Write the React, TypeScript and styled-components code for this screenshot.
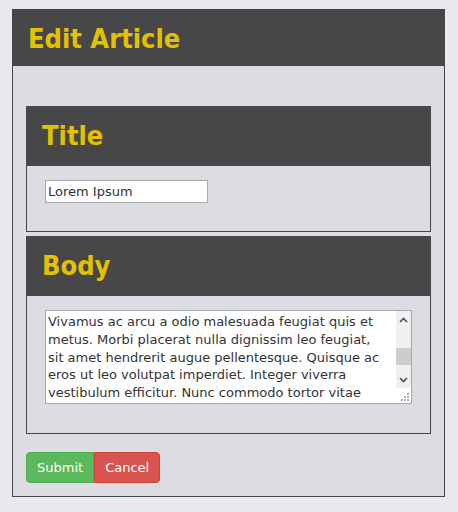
import React, { useLayoutEffect, useRef } from 'react';
import styled, { createGlobalStyle } from 'styled-components';

const GlobalStyle = createGlobalStyle`
  html, body {
    margin: 0;
    padding: 0;
    background: #e8e9ee;
    font-family: "DejaVu Sans", Verdana, sans-serif;
  }
`

const Page = styled.div`
  padding: 9px 13px 15px 12px;
`

const Panel = styled.form`
  background: #dcdde2;
  border: 1px solid #464646;
  display: flex;
  flex-direction: column;
`

const Header = styled.div<{ $height: number }>`
  box-sizing: border-box;
  height: ${(p) => p.$height}px;
  background: #474747;
  padding: 14px 16px 0;
  h1, h2 {
    margin: 0;
    color: #e3c100;
    font-family: "DejaVu Sans Condensed", "DejaVu Sans", Verdana, sans-serif;
    font-size: 27px;
    font-weight: bold;
    line-height: 31px;
  }
`

const PanelHeader = styled(Header)`
  margin: -1px -1px 0;
`

const PanelBody = styled.div`
  padding: 40px 13px 13px;
  display: flex;
  flex-direction: column;
  gap: 4px;
`

const Section = styled.fieldset`
  margin: 0;
  padding: 0;
  border: 1px solid #464646;
  border-top: none;
  min-width: 0;
`

const SectionHeader = styled(Header)`
  margin: 0 -1px;
`

const SectionContent = styled.div<{ $bottom: number }>`
  padding: 14px 18px ${(p) => p.$bottom}px;
`

const TextInput = styled.input`
  box-sizing: border-box;
  display: block;
  width: 163px;
  height: 23px;
  padding: 1px 2px;
  border: 1px solid #a9a9ac;
  background: #fff;
  color: #333;
  font: 13px "DejaVu Sans", Verdana, sans-serif;
  outline: none;
`

const TextBox = styled.div`
  box-sizing: border-box;
  display: flex;
  width: 367px;
  height: 94px;
  border: 1px solid #a9a9ac;
  background: #fff;
`

const TextArea = styled.textarea`
  flex: 1;
  min-width: 0;
  box-sizing: border-box;
  height: 100%;
  margin: 0;
  padding: 2px 13px 2px 2px;
  border: none;
  background: #fff;
  color: #333;
  font: 13px "DejaVu Sans", Verdana, sans-serif;
  line-height: 17.7px;
  overflow: hidden;
  resize: none;
  outline: none;
`

const ScrollBar = styled.div`
  width: 15px;
  display: flex;
  flex-direction: column;
`

const ScrollButton = styled.div`
  height: 17px;
  background: #f0f0f0;
  display: flex;
  align-items: center;
  justify-content: center;
`

const ScrollTrack = styled.div`
  flex: 1;
  background: #f0f0f0;
`

const ScrollThumb = styled.div`
  height: 17px;
  background: #cdcdcd;
`

const ScrollCorner = styled.div`
  height: 15px;
  background: #fff;
  display: flex;
  align-items: flex-end;
  justify-content: flex-end;
  padding: 0 2px 2px 0;
  box-sizing: border-box;
`

const Actions = styled.div`
  display: flex;
  margin-top: 14px;
`

const Button = styled.button<{ $variant: 'submit' | 'cancel' }>`
  height: 31px;
  padding: 0 10px;
  font: 13px "DejaVu Sans", Verdana, sans-serif;
  color: #fff;
  cursor: pointer;
  background: ${(p) => (p.$variant === 'submit' ? '#5cb85c' : '#d9534f')};
  border: 1px solid ${(p) => (p.$variant === 'submit' ? '#4cae4c' : '#d43f3a')};
  border-radius: ${(p) => (p.$variant === 'submit' ? '4px 0 0 4px' : '0 4px 4px 0')};
`

const intro =
  'Lorem ipsum dolor sit amet, consectetur adipiscing elit. Sed posuere interdum sem. Quisque ligula eros ullamcorper quis, lacinia quis facilisis sed sapien. Mauris varius diam vitae arcu. Sed arcu lectus auctor vitae, consectetuer et venenatis.\n\n'

const rest =
  'Vivamus ac arcu a odio malesuada feugiat quis et metus. Morbi placerat nulla dignissim leo feugiat, sit amet hendrerit augue pellentesque. Quisque ac eros ut leo volutpat imperdiet. Integer viverra vestibulum efficitur. Nunc commodo tortor vitae lectus ornare, et elementum massa faucibus. Praesent at ultrices augue, sed facilisis lectus.'

const Chevron = ({ up }: { up?: boolean }) => (
  <svg width='9' height='6' viewBox='0 0 9 6'>
    <path d={up ? 'M1 5l3.5-3.5L8 5' : 'M1 1l3.5 3.5L8 1'} fill='none' stroke='#505050' strokeWidth='1.7' />
  </svg>
)

const Grip = () => (
  <svg width='8' height='8' viewBox='0 0 8 8' fill='#b4b4b4'>
    <rect x='6' y='0' width='2' height='2' />
    <rect x='3' y='3' width='2' height='2' />
    <rect x='6' y='3' width='2' height='2' />
    <rect x='0' y='6' width='2' height='2' />
    <rect x='3' y='6' width='2' height='2' />
    <rect x='6' y='6' width='2' height='2' />
  </svg>
)

function App() {
  const bodyRef = useRef<HTMLTextAreaElement>(null)

  // keep the textarea scrolled so the "Vivamus" paragraph is at the top
  useLayoutEffect(() => {
    const el = bodyRef.current
    if (!el) return
    el.value = rest
    const restHeight = el.scrollHeight
    el.value = intro + rest
    el.scrollTop = el.scrollHeight - restHeight
  }, [])

  return (
    <>
      <GlobalStyle />
      <Page>
        <Panel onSubmit={(e) => e.preventDefault()}>
          <PanelHeader $height={57}>
            <h1>Edit Article</h1>
          </PanelHeader>
          <PanelBody>
            <Section>
              <SectionHeader $height={60}>
                <h2>Title</h2>
              </SectionHeader>
              <SectionContent $bottom={28}>
                <TextInput type='text' defaultValue='Lorem Ipsum' />
              </SectionContent>
            </Section>
            <Section>
              <SectionHeader $height={60}>
                <h2>Body</h2>
              </SectionHeader>
              <SectionContent $bottom={29}>
                <TextBox>
                  <TextArea ref={bodyRef} defaultValue={intro + rest} />
                  <ScrollBar>
                    <ScrollButton><Chevron up /></ScrollButton>
                    <ScrollTrack>
                      <ScrollThumb style={{ marginTop: 20 }} />
                    </ScrollTrack>
                    <ScrollButton><Chevron /></ScrollButton>
                    <ScrollCorner><Grip /></ScrollCorner>
                  </ScrollBar>
                </TextBox>
              </SectionContent>
            </Section>
            <Actions>
              <Button type='submit' $variant='submit'>Submit</Button>
              <Button type='button' $variant='cancel'>Cancel</Button>
            </Actions>
          </PanelBody>
        </Panel>
      </Page>
    </>
  );
}

export default App;
